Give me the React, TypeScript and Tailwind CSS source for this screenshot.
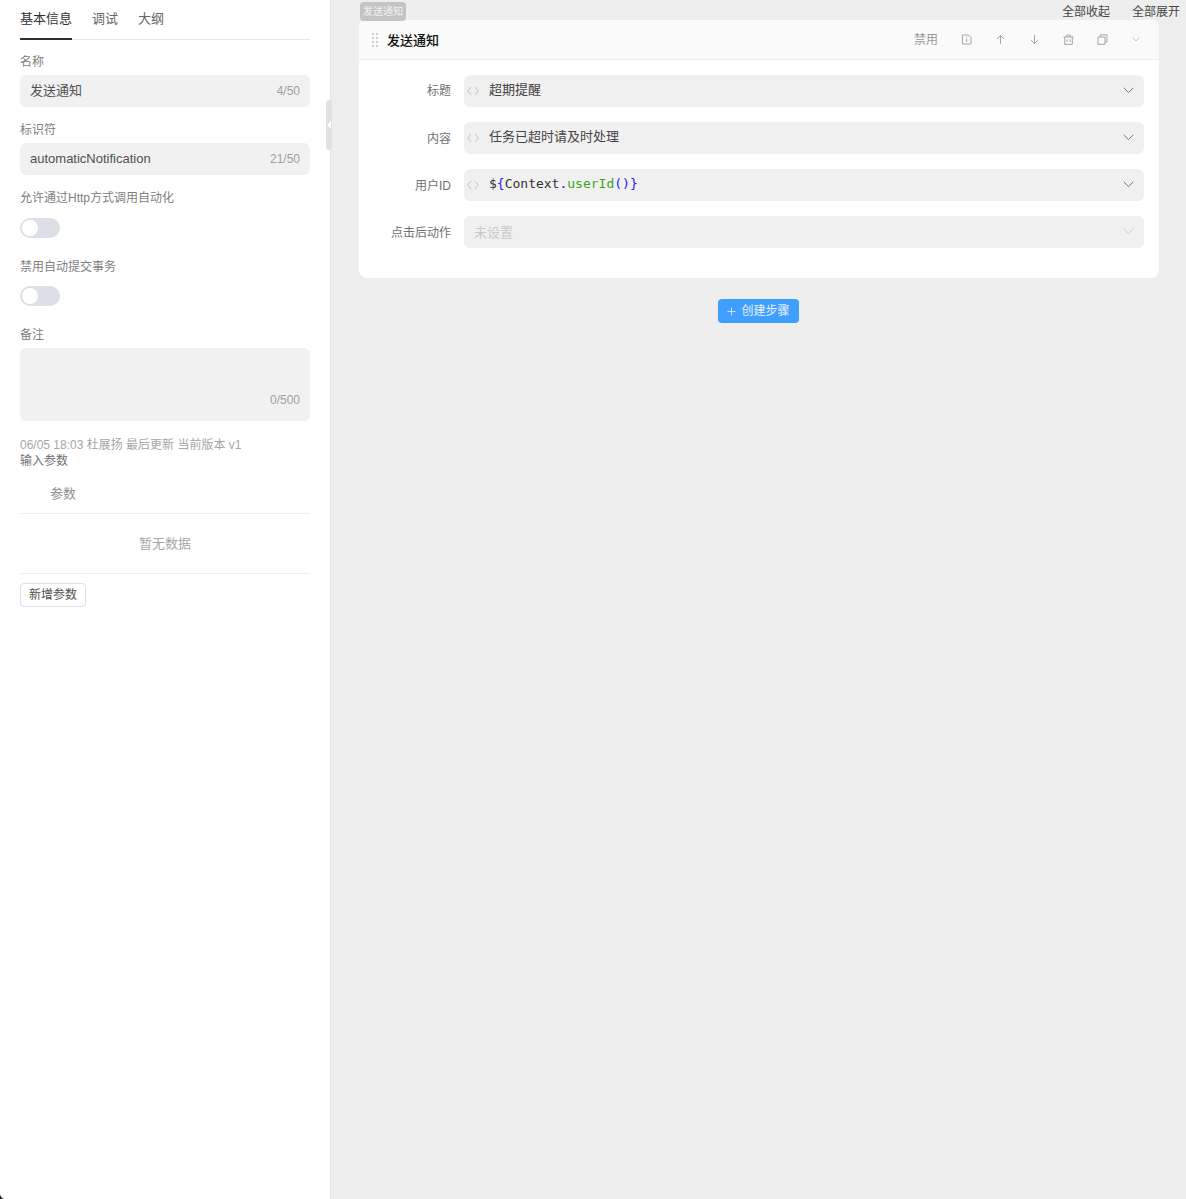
import React from "react";

const SANS = "font-['Liberation_Sans','Noto_Sans_CJK_SC',sans-serif]";

function Toggle() {
  return (
    <div className="w-10 h-5 rounded-full bg-[#dcdfe6] p-[2px]">
      <div className="w-4 h-4 rounded-full bg-white" />
    </div>
  );
}

function Code() {
  return (
    <svg width="12" height="10" viewBox="0 0 12 10" fill="none" stroke="#c4c4c4" strokeWidth="1" className="shrink-0">
      <path d="M4 1 L0.7 5 L4 9" />
      <path d="M8 1 L11.3 5 L8 9" />
    </svg>
  );
}

function Chevron({ color = "#777", w = 11 }: { color?: string; w?: number }) {
  return (
    <svg width={w} height="7" viewBox="0 0 11 7" fill="none" stroke={color} strokeWidth="1">
      <path d="M0.7 0.8 L5.5 5.6 L10.3 0.8" />
    </svg>
  );
}

function Row({ label, children, disabled, first }: { label: string; children: React.ReactNode; disabled?: boolean; first?: boolean }) {
  return (
    <div className="flex items-center h-8">
      <div className={first ? "w-[93px] pr-[13px] text-right text-xs text-[#707070]" : "w-[93px] pr-[13px] text-right text-xs text-[#707070] translate-y-[1px]"}>{label}</div>
      <div className="flex-1 h-8 rounded-md bg-[#f0f0f0] flex items-center pr-[10px]">
        {disabled ? (
          <span className="pl-[10px] text-[13px] text-[#c8c9cc] flex-1 translate-y-[1px]">{children}</span>
        ) : (
          <>
            <span className="ml-[3px] mr-[10px] flex">
              <Code />
            </span>
            <span className="flex-1 text-[13px] text-[#444] -translate-y-[1px]">{children}</span>
          </>
        )}
        <span className="flex -translate-y-[1px]">
          <Chevron color={disabled ? "#ccc" : "#777"} />
        </span>
      </div>
    </div>
  );
}

const stroke = "#a6a6a6";

function HeaderIcons() {
  return (
    <div className="flex items-center text-[#999]">
      <span className="text-xs mr-[23px]">禁用</span>
      <svg className="mr-[23px]" width="11" height="11" viewBox="0 0 11 11" fill="none" stroke={stroke} strokeWidth="1">
        <path d="M1.5 1 H7.5 L10 3.5 V10 H1.5 Z" />
        <path d="M5.7 4.5 V8 M5.7 2.6 V3.4" />
      </svg>
      <svg className="mr-[23px]" width="11" height="11" viewBox="0 0 11 11" fill="none" stroke={stroke} strokeWidth="1">
        <path d="M5.5 10 V1.5 M2 5 L5.5 1.5 L9 5" />
      </svg>
      <svg className="mr-[23px]" width="11" height="11" viewBox="0 0 11 11" fill="none" stroke={stroke} strokeWidth="1">
        <path d="M5.5 1 V9.5 M2 6 L5.5 9.5 L9 6" />
      </svg>
      <svg className="mr-[23px]" width="11" height="11" viewBox="0 0 11 11" fill="none" stroke={stroke} strokeWidth="1">
        <path d="M0.5 3 H10.5 M3.8 3 V1 H7.2 V3 M1.7 3 V10.3 H9.3 V3 M4 5.3 V8 M7 5.3 V8" />
      </svg>
      <svg className="mr-[24px]" width="11" height="11" viewBox="0 0 11 11" fill="none" stroke={stroke} strokeWidth="1">
        <path d="M1 3 H8 V10.3 H1 Z M3.3 3 V0.8 H10 V8 H8" />
      </svg>
      <Chevron color="#b0b0b0" w={8} />
    </div>
  );
}

export default function App() {
  return (
    <div className={`${SANS} relative flex h-[1199px] w-[1186px] overflow-hidden bg-[#eeeeee]`}>
      <aside className="relative w-[330px] shrink-0 bg-white border-r border-[#e4e4e4] box-content px-0">
        <div className="px-5 w-[330px]">
          <div className="flex h-10 border-b border-[#e4e7ed] text-[13px] text-[#666]">
            <div className="h-10 border-b-2 border-[#303133] text-[#303133] pt-[10px] leading-[18px]">基本信息</div>
            <div className="ml-[20px] pt-[10px] leading-[18px]">调试</div>
            <div className="ml-[20px] pt-[10px] leading-[18px]">大纲</div>
          </div>

          <div className="mt-[13px] text-xs leading-[18px] text-[#808080]">名称</div>
          <div className="mt-[4px] h-8 rounded-md bg-[#f1f1f1] px-[10px] flex items-center justify-between">
            <span className="text-[13px] text-[#505050]">发送通知</span>
            <span className="text-xs text-[#a0a0a0]">4/50</span>
          </div>

          <div className="mt-[14px] text-xs leading-[18px] text-[#808080]">标识符</div>
          <div className="mt-[4px] h-8 rounded-md bg-[#f1f1f1] px-[10px] flex items-center justify-between">
            <span className="text-[13px] text-[#505050]">automaticNotification</span>
            <span className="text-xs text-[#a0a0a0]">21/50</span>
          </div>

          <div className="mt-[14px] text-xs leading-[18px] text-[#808080]">允许通过Http方式调用自动化</div>
          <div className="mt-[11px]">
            <Toggle />
          </div>

          <div className="mt-[20px] text-xs leading-[18px] text-[#808080]">禁用自动提交事务</div>
          <div className="mt-[10px]">
            <Toggle />
          </div>

          <div className="mt-[20px] text-xs leading-[18px] text-[#808080]">备注</div>
          <div className="mt-[4px] h-[73px] rounded-md bg-[#f1f1f1] px-[10px] pb-[13px] flex items-end justify-end">
            <span className="text-xs leading-[16px] text-[#a0a0a0]">0/500</span>
          </div>

          <div className="mt-[16px] text-xs leading-[16px] text-[#a6a6a6]">06/05 18:03 杜展扬 最后更新 当前版本 v1</div>
          <div className="text-xs leading-[16px] text-[#707070]">输入参数</div>

          <div className="h-[45px] border-b border-[#ebeef5] pl-[30px] text-[13px] leading-[18px] pt-[16px] text-[#909090]">
            参数
          </div>
          <div className="h-[60px] border-b border-[#ebeef5] flex items-center justify-center text-[13px] text-[#a6a6a6]">
            暂无数据
          </div>
          <button className="mt-[9px] h-6 w-[66px] rounded border border-[#dcdfe6] bg-white text-xs text-[#505050] flex items-center justify-center">
            新增参数
          </button>
        </div>
        <div className="absolute left-[326px] top-[100px] w-[6px] h-[50px] rounded-[3px] bg-[#e2e2e2] flex items-center">
          <div className="w-0 h-0 border-y-[4px] border-y-transparent border-r-[4px] border-r-white ml-[1px]" />
        </div>
      </aside>

      <main className="flex-1 min-w-0 relative">
        <div className="flex justify-end h-[20px] text-xs text-[#444] pr-[6px] gap-[22px] leading-[24px]">
          <span>全部收起</span>
          <span>全部展开</span>
        </div>
        <div className="relative ml-[28px] w-[800px] h-[258px] rounded-lg bg-white">
          <div className="absolute -top-[18px] left-[1px] h-[19px] w-[46px] rounded bg-[#c4c4c4] text-[10px] leading-[19px] text-[#f3f3f3] text-center">
            发送通知
          </div>
          <div className="h-10 rounded-t-lg bg-[#fafafa] border-b border-[#ececec] flex items-center justify-between pl-[13px] pr-[19px]">
            <div className="flex items-center">
              <div className="grid grid-cols-2 gap-x-[2px] gap-y-[2px] mr-[9px]">
                {[0, 1, 2, 3, 4, 5, 6, 7].map((i) => (
                  <span key={i} className="w-[2px] h-[2px] bg-[#cfcfcf]" />
                ))}
              </div>
              <span className="text-[13px] font-medium text-[#111] translate-y-[1px]">发送通知</span>
            </div>
            <HeaderIcons />
          </div>
          <div className="pt-[15px] pl-[12px] pr-[15px] flex flex-col gap-[15px]">
            <Row label="标题" first>超期提醒</Row>
            <Row label="内容">任务已超时请及时处理</Row>
            <Row label="用户ID">
              <span className="font-['DejaVu_Sans_Mono',monospace] text-[13px] whitespace-pre">
                <span className="text-[#333]">$</span>
                <span className="text-[#1a1aff]">{"{"}</span>
                <span className="text-[#333]">Context</span>
                <span className="text-[#1a1aa6]">.</span>
                <span className="text-[#3aa51d]">userId</span>
                <span className="text-[#1a1aff]">{"()}"}</span>
              </span>
            </Row>
            <Row label="点击后动作" disabled>
              未设置
            </Row>
          </div>
        </div>
        <div className="flex justify-center mt-[21px] w-[855px]">
          <button className="h-6 w-[81px] rounded bg-[#409eff] text-xs text-[#e8f3ff] flex items-center justify-center gap-[5px]">
            <svg width="9" height="9" viewBox="0 0 9 9" stroke="#cfe5ff" strokeWidth="1">
              <path d="M4.5 0.5 V8.5 M0.5 4.5 H8.5" />
            </svg>
            创建步骤
          </button>
        </div>
      </main>

      <svg className="absolute left-0 bottom-0" width="4" height="5" viewBox="0 0 4 5">
        <path d="M0 0 Q0.5 3.5 4 5 H0 Z" fill="#222" />
      </svg>
    </div>
  );
}
